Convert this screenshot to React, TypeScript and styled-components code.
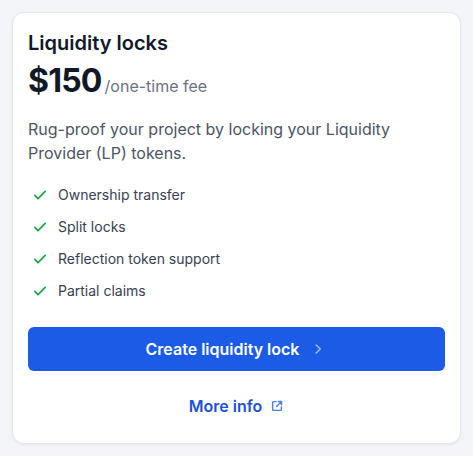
import styled, { createGlobalStyle } from "styled-components";

const features = [
  "Ownership transfer",
  "Split locks",
  "Reflection token support",
  "Partial claims",
];

const App = () => {
  return (
    <Page>
      <GlobalStyle />
      <Card>
        <Title>Liquidity locks</Title>
        <PriceRow>
          <Price>$150</Price>
          <PriceUnit>/one-time fee</PriceUnit>
        </PriceRow>
        <Description>
          Rug-proof your project by locking your Liquidity Provider (LP) tokens.
        </Description>
        <FeatureList>
          {features.map((f) => (
            <Feature key={f}>
              <CheckIcon viewBox="0 0 20 20" fill="none">
                <path
                  d="M3.5 10.5l4 4 9-9"
                  stroke="currentColor"
                  strokeWidth="2.1"
                  strokeLinecap="round"
                  strokeLinejoin="round"
                />
              </CheckIcon>
              {f}
            </Feature>
          ))}
        </FeatureList>
        <PrimaryButton>
          Create liquidity lock
          <Chevron viewBox="0 0 20 20" fill="none">
            <path
              d="M8 5.5l4.5 4.5L8 14.5"
              stroke="currentColor"
              strokeWidth="1.6"
              strokeLinecap="round"
              strokeLinejoin="round"
            />
          </Chevron>
        </PrimaryButton>
        <LinkButton>
          More info
          <ExternalIcon viewBox="0 0 16 16" fill="none">
            <path
              d="M7 3H4a1 1 0 0 0-1 1v8a1 1 0 0 0 1 1h8a1 1 0 0 0 1-1V9"
              stroke="currentColor"
              strokeWidth="1.6"
              strokeLinecap="round"
            />
            <path
              d="M9.5 2.8h3.7v3.7M13 3L7.5 8.5"
              stroke="currentColor"
              strokeWidth="1.6"
              strokeLinecap="round"
              strokeLinejoin="round"
            />
          </ExternalIcon>
        </LinkButton>
      </Card>
    </Page>
  );
};

const GlobalStyle = createGlobalStyle`
  body {
    margin: 0;
    background: #f3f5f8;
    font-family: Inter, "Noto Sans", sans-serif;
  }
`;

const Page = styled.div`
  padding: 12px;
`;

const Card = styled.section`
  background: #ffffff;
  border: 1px solid #e5e7eb;
  border-radius: 12px;
  box-shadow: 0 1px 3px rgba(16, 24, 40, 0.06);
  padding: 16px 15px 17px;
  display: flex;
  flex-direction: column;
`;

const Title = styled.h2`
  margin: 0;
  font-size: 20px;
  line-height: 28px;
  font-weight: 600;
  color: #111827;
`;

const PriceRow = styled.div`
  margin-top: 4px;
  display: flex;
  align-items: baseline;
  gap: 3px;
`;

const Price = styled.span`
  font-size: 32px;
  line-height: 40px;
  font-weight: 700;
  letter-spacing: -0.8px;
  color: #111827;
`;

const PriceUnit = styled.span`
  font-size: 16px;
  color: #6b7280;
`;

const Description = styled.p`
  margin: 16px 0 0;
  font-size: 16px;
  line-height: 24px;
  color: #4b5563;
`;

const FeatureList = styled.ul`
  list-style: none;
  margin: 20px 0 0;
  padding: 0 0 0 4px;
  display: flex;
  flex-direction: column;
  gap: 12px;
`;

const Feature = styled.li`
  display: flex;
  align-items: center;
  gap: 10px;
  font-size: 14px;
  line-height: 20px;
  color: #374151;
`;

const CheckIcon = styled.svg`
  width: 16px;
  height: 16px;
  color: #16a34a;
  flex-shrink: 0;
`;

const PrimaryButton = styled.button`
  margin-top: 26px;
  height: 44px;
  border: none;
  border-radius: 6px;
  background: #1c5be6;
  color: #ffffff;
  font-family: inherit;
  font-size: 16px;
  font-weight: 600;
  display: flex;
  align-items: center;
  justify-content: center;
  gap: 10px;
  cursor: pointer;
`;

const Chevron = styled.svg`
  width: 18px;
  height: 18px;
  color: #a5c0f7;
`;

const LinkButton = styled.a`
  margin-top: 15px;
  padding: 8px 0;
  display: flex;
  align-items: center;
  justify-content: center;
  gap: 8px;
  font-size: 16px;
  line-height: 24px;
  font-weight: 600;
  color: #1d4fd8;
  cursor: pointer;
`;

const ExternalIcon = styled.svg`
  width: 14px;
  height: 14px;
  color: #4a7bea;
`;

export default App;
